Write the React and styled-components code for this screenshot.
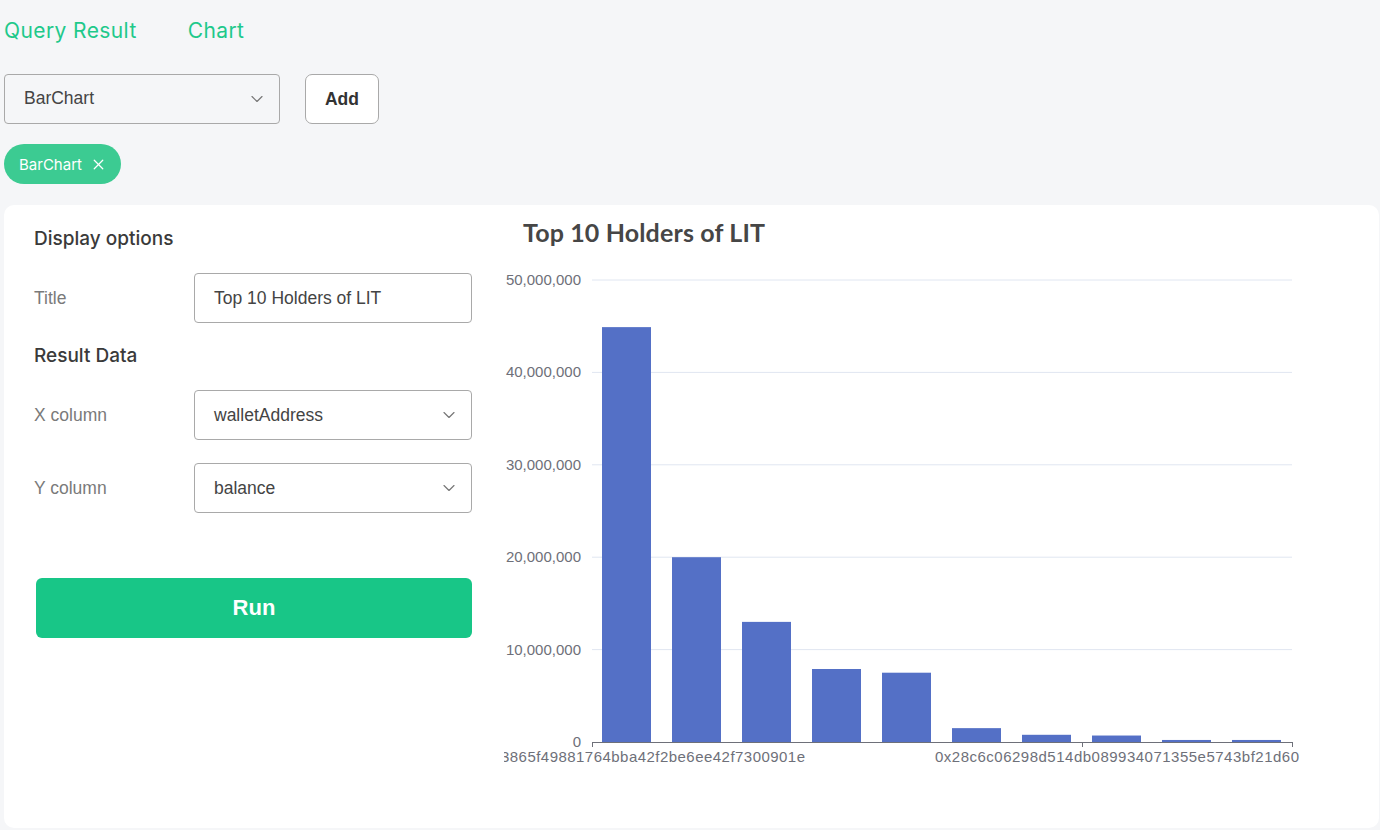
import styled, { createGlobalStyle } from 'styled-components';
import { ChevronDown, X } from 'lucide-react';

const GlobalStyle = createGlobalStyle`
    * { box-sizing: border-box; }
    body {
        margin: 0;
        background: #f5f6f8;
        font-family: Inter, "Noto Sans", sans-serif;
    }
`;

const Page = styled.div`
    width: 1380px;
    height: 830px;
    padding: 0 1px 0 4px;
    overflow: hidden;
`;

const Tabs = styled.nav`
    display: flex;
    align-items: center;
    gap: 51px;
    height: 60px;
`;

const Tab = styled.span`
    font-size: 21px;
    color: #1fc98b;
    letter-spacing: 0.4px;
`;

const Toolbar = styled.div`
    display: flex;
    align-items: center;
    gap: 25px;
    margin-top: 13px;
`;

const SelectBox = styled.div`
    display: flex;
    align-items: center;
    justify-content: space-between;
    width: ${(p) => p.width || 278}px;
    height: 50px;
    padding: 0 12px 0 19px;
    border: 1px solid #a9a9a9;
    border-radius: 4px;
    font-family: "Liberation Sans", Arial, sans-serif;
    font-size: 17.5px;
    color: #444;
    background: ${(p) => (p.transparent ? 'transparent' : '#fff')};
`;

const AddButton = styled.button`
    width: 74px;
    height: 50px;
    margin-top: 1px;
    background: #fff;
    border: 1px solid #a9a9a9;
    border-radius: 7px;
    font-family: "Liberation Sans", Arial, sans-serif;
    font-weight: 700;
    font-size: 17.5px;
    color: #333;
`;

const Tag = styled.div`
    display: inline-flex;
    align-items: center;
    gap: 8px;
    height: 40px;
    margin-top: 20px;
    padding: 0 14px 0 15px;
    border-radius: 20px;
    background: #3ccb92;
    color: #fff;
    font-size: 15px;
`;

const Card = styled.section`
    display: flex;
    margin-top: 21px;
    height: 623px;
    background: #fff;
    border-radius: 10px;
    overflow: hidden;
`;

const Options = styled.div`
    width: 468px;
    padding: 23px 0 0 30px;
    flex-shrink: 0;
`;

const Heading = styled.h3`
    margin: 0 0 ${(p) => p.gap || 23}px;
    height: 22px;
    line-height: 22px;
    font-size: 19px;
    font-weight: 500;
    color: #3a3a3a;
`;

const Row = styled.div`
    display: flex;
    align-items: center;
    margin-bottom: ${(p) => p.gap || 23}px;
`;

const Label = styled.label`
    width: 160px;
    font-family: "Liberation Sans", Arial, sans-serif;
    font-size: 17.5px;
    color: #7a7a7a;
`;

const RunButton = styled.button`
    display: block;
    width: 436px;
    height: 60px;
    margin: 65px 0 0 2px;
    border: none;
    border-radius: 6px;
    background: #18c687;
    color: #fff;
    font-family: "Liberation Sans", Arial, sans-serif;
    font-weight: 700;
    font-size: 22px;
`;

const ChartWrap = styled.div`
    margin-left: 32px;
    width: 875px;
    height: 620px;
    overflow: hidden;
`;

const bars = [44.9, 20.0, 13.0, 7.9, 7.5, 1.5, 0.78, 0.7, 0.22, 0.22];
const ticks = [0, 10, 20, 30, 40, 50];

function Select({ value }) {
    return (
        <SelectBox>
            <span>{value}</span>
            <ChevronDown size={20} strokeWidth={1.4} color="#777" />
        </SelectBox>
    );
}

function BarChart() {
    const left = 88;
    const bottom = 537;
    const unit = 9.24;
    const band = 70;
    const axisFont = { fontFamily: '"Liberation Sans", Arial, sans-serif', fontSize: 15, fill: '#6e7079' };
    return (
        <svg width="875" height="620" viewBox="0 0 875 620">
            <text x="19" y="37" textLength="242" fontFamily="Lato, sans-serif" fontWeight="700" fontSize="25" fill="#464646">
                Top 10 Holders of LIT
            </text>
            {ticks.map((t) => {
                const y = bottom - t * unit;
                return (
                    <g key={t}>
                        {t > 0 && <line x1={left} x2={left + 700} y1={y} y2={y} stroke="#e0e6f1" />}
                        <text x="77" y={y + 5} textAnchor="end" {...axisFont}>
                            {t === 0 ? '0' : `${t},000,000`}
                        </text>
                    </g>
                );
            })}
            {bars.map((v, i) => (
                <rect
                    key={i}
                    x={left + i * band + 10}
                    y={bottom - v * unit}
                    width="49"
                    height={v * unit}
                    fill="#5470c6"
                />
            ))}
            <line x1={left} x2={left + 700} y1={bottom + 0.5} y2={bottom + 0.5} stroke="#6e7079" />
            {[0, 7, 10].map((i) => (
                <line key={i} x1={left + i * band + 0.5} x2={left + i * band + 0.5} y1={bottom} y2={bottom + 5} stroke="#6e7079" />
            ))}
            <text x={left + 35} y="557" textAnchor="middle" textLength="356" {...axisFont}>
                0xa3e73865f49881764bba42f2be6ee42f7300901e
            </text>
            <text x={left + 7 * band + 35} y="557" textAnchor="middle" textLength="364" {...axisFont}>
                0x28c6c06298d514db089934071355e5743bf21d60
            </text>
        </svg>
    );
}

export default function App() {
    return (
        <Page>
            <GlobalStyle />
            <Tabs>
                <Tab>Query Result</Tab>
                <Tab>Chart</Tab>
            </Tabs>
            <Toolbar>
                <SelectBox width={276} transparent>
                    <span>BarChart</span>
                    <ChevronDown size={20} strokeWidth={1.4} color="#777" />
                </SelectBox>
                <AddButton>Add</AddButton>
            </Toolbar>
            <Tag>
                BarChart
                <X size={17} strokeWidth={1.8} />
            </Tag>
            <Card>
                <Options>
                    <Heading>Display options</Heading>
                    <Row gap={22}>
                        <Label>Title</Label>
                        <SelectBox>Top 10 Holders of LIT</SelectBox>
                    </Row>
                    <Heading>Result Data</Heading>
                    <Row>
                        <Label>X column</Label>
                        <Select value="walletAddress" />
                    </Row>
                    <Row>
                        <Label>Y column</Label>
                        <Select value="balance" />
                    </Row>
                    <RunButton>Run</RunButton>
                </Options>
                <ChartWrap>
                    <BarChart />
                </ChartWrap>
            </Card>
        </Page>
    );
}
